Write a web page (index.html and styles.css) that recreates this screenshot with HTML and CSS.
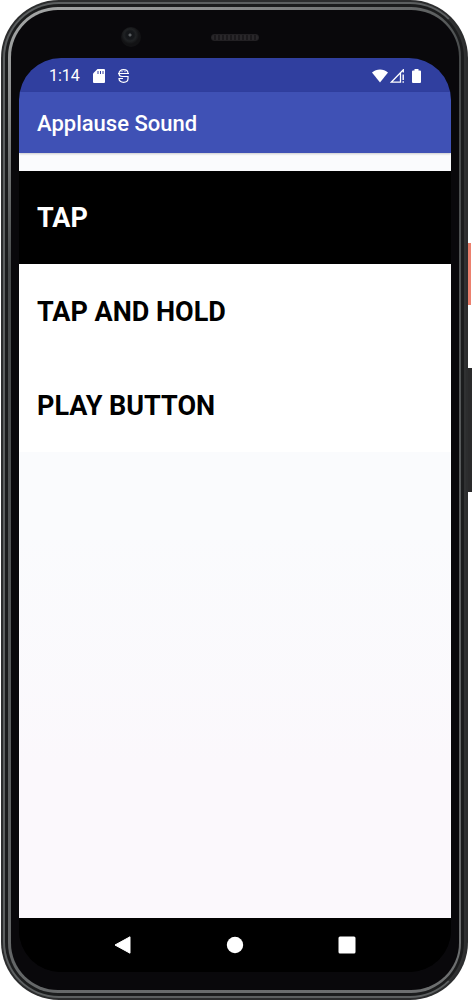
FILE: index.html
```html
<!DOCTYPE html>
<html lang="en">
<head>
  <meta charset="UTF-8" />
  <meta name="viewport" content="width=device-width, initial-scale=1.0"/>
  <title>Applause Sound</title>
  <link rel="stylesheet" href="styles.css">
</head>
<body>

  <div class="phone">
    <span class="side-btn power"></span>
    <span class="side-btn volume"></span>

    <div class="rim">
      <div class="glass">
        <!-- Camera and speaker -->
        <div class="bezel-top">
          <span class="camera"></span>
          <span class="speaker"></span>
        </div>

        <div class="screen">
          <div class="status-bar">
            <span class="clock">1:14</span>
            <svg class="sd-icon" width="12" height="14" viewBox="0 0 12 14">
              <path fill="#fff" d="M4.500 0H11a1 1 0 0 1 1 1v12a1 1 0 0 1-1 1H1a1 1 0 0 1-1-1V4.500z"/>
              <path stroke="#303f9f" stroke-width="1" d="M5 2v3M7.500 2v3M10 2v3"/>
            </svg>
            <svg class="s-icon" width="11" height="14" viewBox="0 0 11 14" fill="none" stroke="#fff">
              <path stroke-width="1.200" d="M1 4.500C1 2 3 .7 5.500.7S10 2 10 4.500M0 4.500h11M1 4.500C1 6.500 2.500 7.500 4 7.500h6v2c0 2.500-2 3.800-4.500 3.800S1 12 1 9.500h4"/>
              <path stroke-width="1" d="M3.500 2.600h1M6.500 2.600h1"/>
            </svg>
            <svg class="wifi-icon" width="16" height="14" viewBox="0 0 16 14">
              <path fill="#fff" d="M0 3.500C4.500-.5 11.500-.5 16 3.500L8 13.500z"/>
            </svg>
            <svg class="signal-icon" width="14" height="14" viewBox="0 0 14 14" fill="none" stroke="#fff">
              <path stroke-width="1.300" d="M13.300 3.500V.8L1.200 13.200h9.300V4"/>
              <path stroke-width="1.400" d="M13.200 5.500v5.500M13.200 12.300v1.500"/>
            </svg>
            <svg class="battery-icon" width="9" height="14" viewBox="0 0 9 14">
              <path fill="#fff" d="M2.500 0h4v1.500H8a1 1 0 0 1 1 1V13a1 1 0 0 1-1 1H1a1 1 0 0 1-1-1V2.500a1 1 0 0 1 1-1h1.500z"/>
            </svg>
          </div>

          <header class="toolbar">
            <h1>Applause Sound</h1>
          </header>

          <main class="content">
            <div class="options">
              <button class="option active">TAP</button>
              <button class="option">TAP AND HOLD</button>
              <button class="option">PLAY BUTTON</button>
            </div>
          </main>

          <nav class="nav-bar">
            <button class="nav-btn" aria-label="Back">
              <svg width="18" height="18" viewBox="0 0 18 18"><path fill="#fff" stroke="#fff" stroke-linejoin="round" d="M1 9L16 .8v16.400z"/></svg>
            </button>
            <button class="nav-btn" aria-label="Home">
              <svg width="18" height="18" viewBox="0 0 18 18"><circle fill="#fff" cx="9" cy="9" r="8.200"/></svg>
            </button>
            <button class="nav-btn" aria-label="Recent apps">
              <svg width="18" height="18" viewBox="0 0 18 18"><rect fill="#fff" x=".5" y=".5" width="17" height="17" rx="1.500"/></svg>
            </button>
          </nav>
        </div>
      </div>
    </div>
  </div>

</body>
</html>
```
FILE: styles.css
```css
* {
  box-sizing: border-box;
}

body {
  margin: 0;
  background: #fff;
  font-family: Roboto, sans-serif;
}

button {
  border: none;
  cursor: pointer;
  font-family: inherit;
}

/* Phone body */
.phone {
  position: relative;
  display: flex;
  min-height: 100vh;
  margin: 0 4px 0 1px;
  padding: 2px;
  border-radius: 58px;
  background: #2c2d2e;
}

.rim {
  flex: 1;
  display: flex;
  padding: 3px;
  border: 2px solid #5c5f60;
  border-right-color: #303132;
  border-radius: 56px;
  background: #1b1c1d;
}

/* The glass edge catches the light in the top left corner */
.glass {
  flex: 1;
  display: flex;
  flex-direction: column;
  padding: 0 8px 18px;
  border: 3px solid transparent;
  border-right-width: 2px;
  border-radius: 50px;
  background:
    linear-gradient(#09080b, #09080b) padding-box,
    linear-gradient(155deg, #a8aaaa, #8c8e8e 8%, #454849 22%, #5a5d5e 60%, #6e7071) border-box;
}

.side-btn {
  position: absolute;
  left: 100%;
  width: 3px;
}

.power {
  top: 243px;
  height: 62px;
  background: #ec806e;
}

.volume {
  top: 368px;
  width: 4px;
  height: 124px;
  background: #2a2a2b;
}

.bezel-top {
  display: grid;
  grid-template-columns: 1fr 48px 1fr;
  align-items: center;
  height: 48px;
  padding-top: 6px;
}

.camera {
  justify-self: center;
  width: 20px;
  height: 20px;
  margin-left: 32px;
  border-radius: 50%;
  background: radial-gradient(circle at 45% 40%, #5a5e61 0 1px, #15171a 2px 4px, #202224 6px, #121214 9px);
}

.speaker {
  height: 7px;
  border: 1px solid #222023;
  border-radius: 3px;
  background: repeating-linear-gradient(90deg, #29272a 0 2px, #1b191c 2px 4px);
}

/* Screen */
.screen {
  flex: 1;
  display: flex;
  flex-direction: column;
  overflow: hidden;
  border-radius: 42px;
  background: #000;
}

.status-bar {
  display: flex;
  align-items: center;
  height: 34px;
  padding: 2px 30px 0;
  background: #303f9f;
  color: #fff;
}

.clock {
  font-size: 16px;
  line-height: 20px;
}

.sd-icon {
  margin-left: 13px;
}

.s-icon {
  margin-left: 13px;
}

.wifi-icon {
  margin-left: auto;
}

.signal-icon {
  margin-left: 2px;
}

.battery-icon {
  margin-left: 8px;
}

.toolbar {
  z-index: 1;
  display: flex;
  align-items: center;
  height: 61px;
  padding: 2px 18px 0;
  background: #3f51b5;
  box-shadow: 0 1px 2px rgba(0, 0, 0, 0.2);
}

.toolbar h1 {
  margin: 0;
  color: #fff;
  font-size: 22px;
  font-weight: 500;
  line-height: 28px;
}

.content {
  flex: 1;
  padding-top: 18px;
  background: linear-gradient(#fafbfd, #fafbfd 50%, #fbf8fc 80%);
}

.options {
  display: flex;
  flex-direction: column;
  gap: 1px;
  background: #fff;
}

.option {
  min-height: 93px;
  padding: 0 18px;
  background: #fff;
  color: #000;
  font-size: 27px;
  font-weight: 700;
  text-align: left;
}

.option.active {
  background: #000;
  color: #fff;
}

/* Back, home, recents */
.nav-bar {
  display: flex;
  justify-content: space-between;
  align-items: center;
  height: 54px;
  padding: 0 86px;
  background: #000;
}

.nav-btn {
  display: flex;
  padding: 9px;
  background: none;
}
```
